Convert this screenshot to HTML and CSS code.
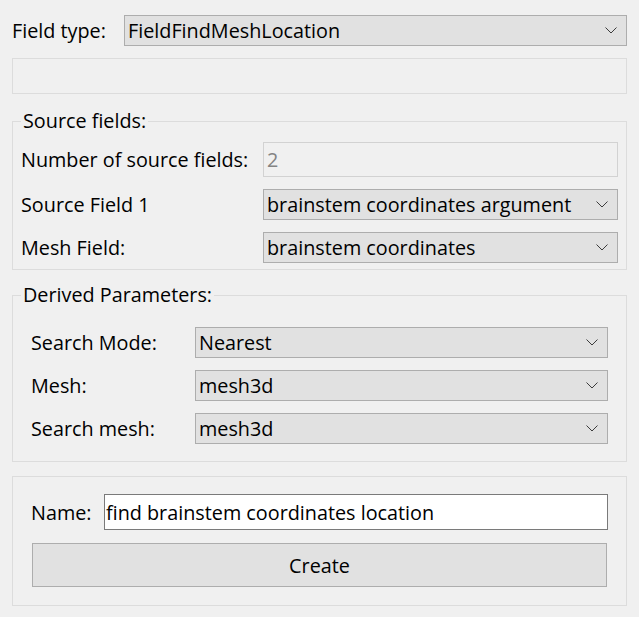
FILE: index.html
```html
<!DOCTYPE html>
<html>
<head>
<meta charset="utf-8">
<title>Field editor</title>
<link rel="stylesheet" href="styles.css">
</head>
<body>
<div class="panel">
  <div class="type-row">
    <span class="type-label">Field type:</span>
    <div class="combo type-combo"><span class="combo-text">FieldFindMeshLocation</span><svg class="chev" viewBox="0 0 12 7"><path d="M0.5 0.5 L6 6 L11.5 0.5"/></svg></div>
  </div>
  <div class="empty-frame"></div>

  <fieldset class="group">
    <legend>Source fields:</legend>
    <div class="form source-form">
      <span class="label">Number of source fields:</span>
      <div class="lineedit disabled">2</div>
      <span class="label">Source Field 1</span>
      <div class="combo"><span class="combo-text">brainstem coordinates argument</span><svg class="chev" viewBox="0 0 12 7"><path d="M0.5 0.5 L6 6 L11.5 0.5"/></svg></div>
      <span class="label">Mesh Field:</span>
      <div class="combo"><span class="combo-text">brainstem coordinates</span><svg class="chev" viewBox="0 0 12 7"><path d="M0.5 0.5 L6 6 L11.5 0.5"/></svg></div>
    </div>
  </fieldset>

  <fieldset class="group derived">
    <legend>Derived Parameters:</legend>
    <div class="form derived-form">
      <span class="label">Search Mode:</span>
      <div class="combo"><span class="combo-text">Nearest</span><svg class="chev" viewBox="0 0 12 7"><path d="M0.5 0.5 L6 6 L11.5 0.5"/></svg></div>
      <span class="label">Mesh:</span>
      <div class="combo"><span class="combo-text">mesh3d</span><svg class="chev" viewBox="0 0 12 7"><path d="M0.5 0.5 L6 6 L11.5 0.5"/></svg></div>
      <span class="label">Search mesh:</span>
      <div class="combo"><span class="combo-text">mesh3d</span><svg class="chev" viewBox="0 0 12 7"><path d="M0.5 0.5 L6 6 L11.5 0.5"/></svg></div>
    </div>
  </fieldset>

  <div class="create-box">
    <div class="name-row">
      <span class="name-label">Name:</span>
      <div class="lineedit name-edit">find brainstem coordinates location</div>
    </div>
    <div class="button">Create</div>
  </div>
</div>
</body>
</html>
```

FILE: styles.css
```css
html, body {
  margin: 0;
  background: #f0f0f0;
}

body {
  font-family: "Open Sans", "Noto Sans", "DejaVu Sans", sans-serif;
  font-size: 19.8px;
  color: #000;
}

.panel {
  display: flex;
  flex-direction: column;
  padding: 15px 12px 0 12px;
}

.type-row {
  display: flex;
  align-items: center;
  height: 31px;
}

.type-label {
  width: 112px;
  flex: none;
  white-space: nowrap;
}

.type-combo {
  flex: 1;
}

.combo {
  box-sizing: border-box;
  height: 31px;
  border: 1px solid #adadad;
  background: #e1e1e1;
  display: flex;
  align-items: center;
  padding: 0 9px 0 3px;
  min-width: 0;
}

.combo-text {
  flex: 1;
  white-space: nowrap;
  overflow: hidden;
}

.chev {
  width: 12px;
  height: 7px;
  flex: none;
}

.chev path {
  fill: none;
  stroke: #3c3c3c;
  stroke-width: 1;
}

.empty-frame {
  margin-top: 12px;
  height: 36px;
  box-sizing: border-box;
  border: 1px solid #dcdcdc;
}

.group {
  margin: 17px 0 0;
  padding: 0 8px;
  border: 1px solid #dcdcdc;
  min-width: 0;
}

.group.derived {
  margin-top: 15px;
}

.group legend {
  padding: 0 2px;
  height: 20px;
  line-height: 20px;
}

.form {
  display: grid;
  row-gap: 12px;
  align-items: center;
}

.source-form {
  grid-template-columns: 242px 1fr;
  padding: 11px 0 6px;
}

.derived-form {
  grid-template-columns: 164px 1fr;
  padding: 22px 10px 17px;
}

.label {
  white-space: nowrap;
}

.lineedit {
  box-sizing: border-box;
  display: flex;
  align-items: center;
  white-space: nowrap;
}

.lineedit.disabled {
  height: 35px;
  border: 1px solid #d2d2d2;
  background: #f0f0f0;
  color: #838383;
  padding-left: 3px;
}

.create-box {
  margin-top: 14px;
  border: 1px solid #dcdcdc;
  padding: 17px 18px 18px;
  display: flex;
  flex-direction: column;
}

.name-row {
  display: flex;
  align-items: center;
}

.name-label {
  width: 73px;
  flex: none;
}

.name-edit {
  flex: 1;
  height: 36px;
  border: 1px solid #7a7a7a;
  background: #fff;
  padding-left: 1px;
}

.button {
  margin: 13px 1px 0 1px;
  height: 44px;
  box-sizing: border-box;
  border: 1px solid #adadad;
  background: #e1e1e1;
  display: flex;
  align-items: center;
  justify-content: center;
}
```
